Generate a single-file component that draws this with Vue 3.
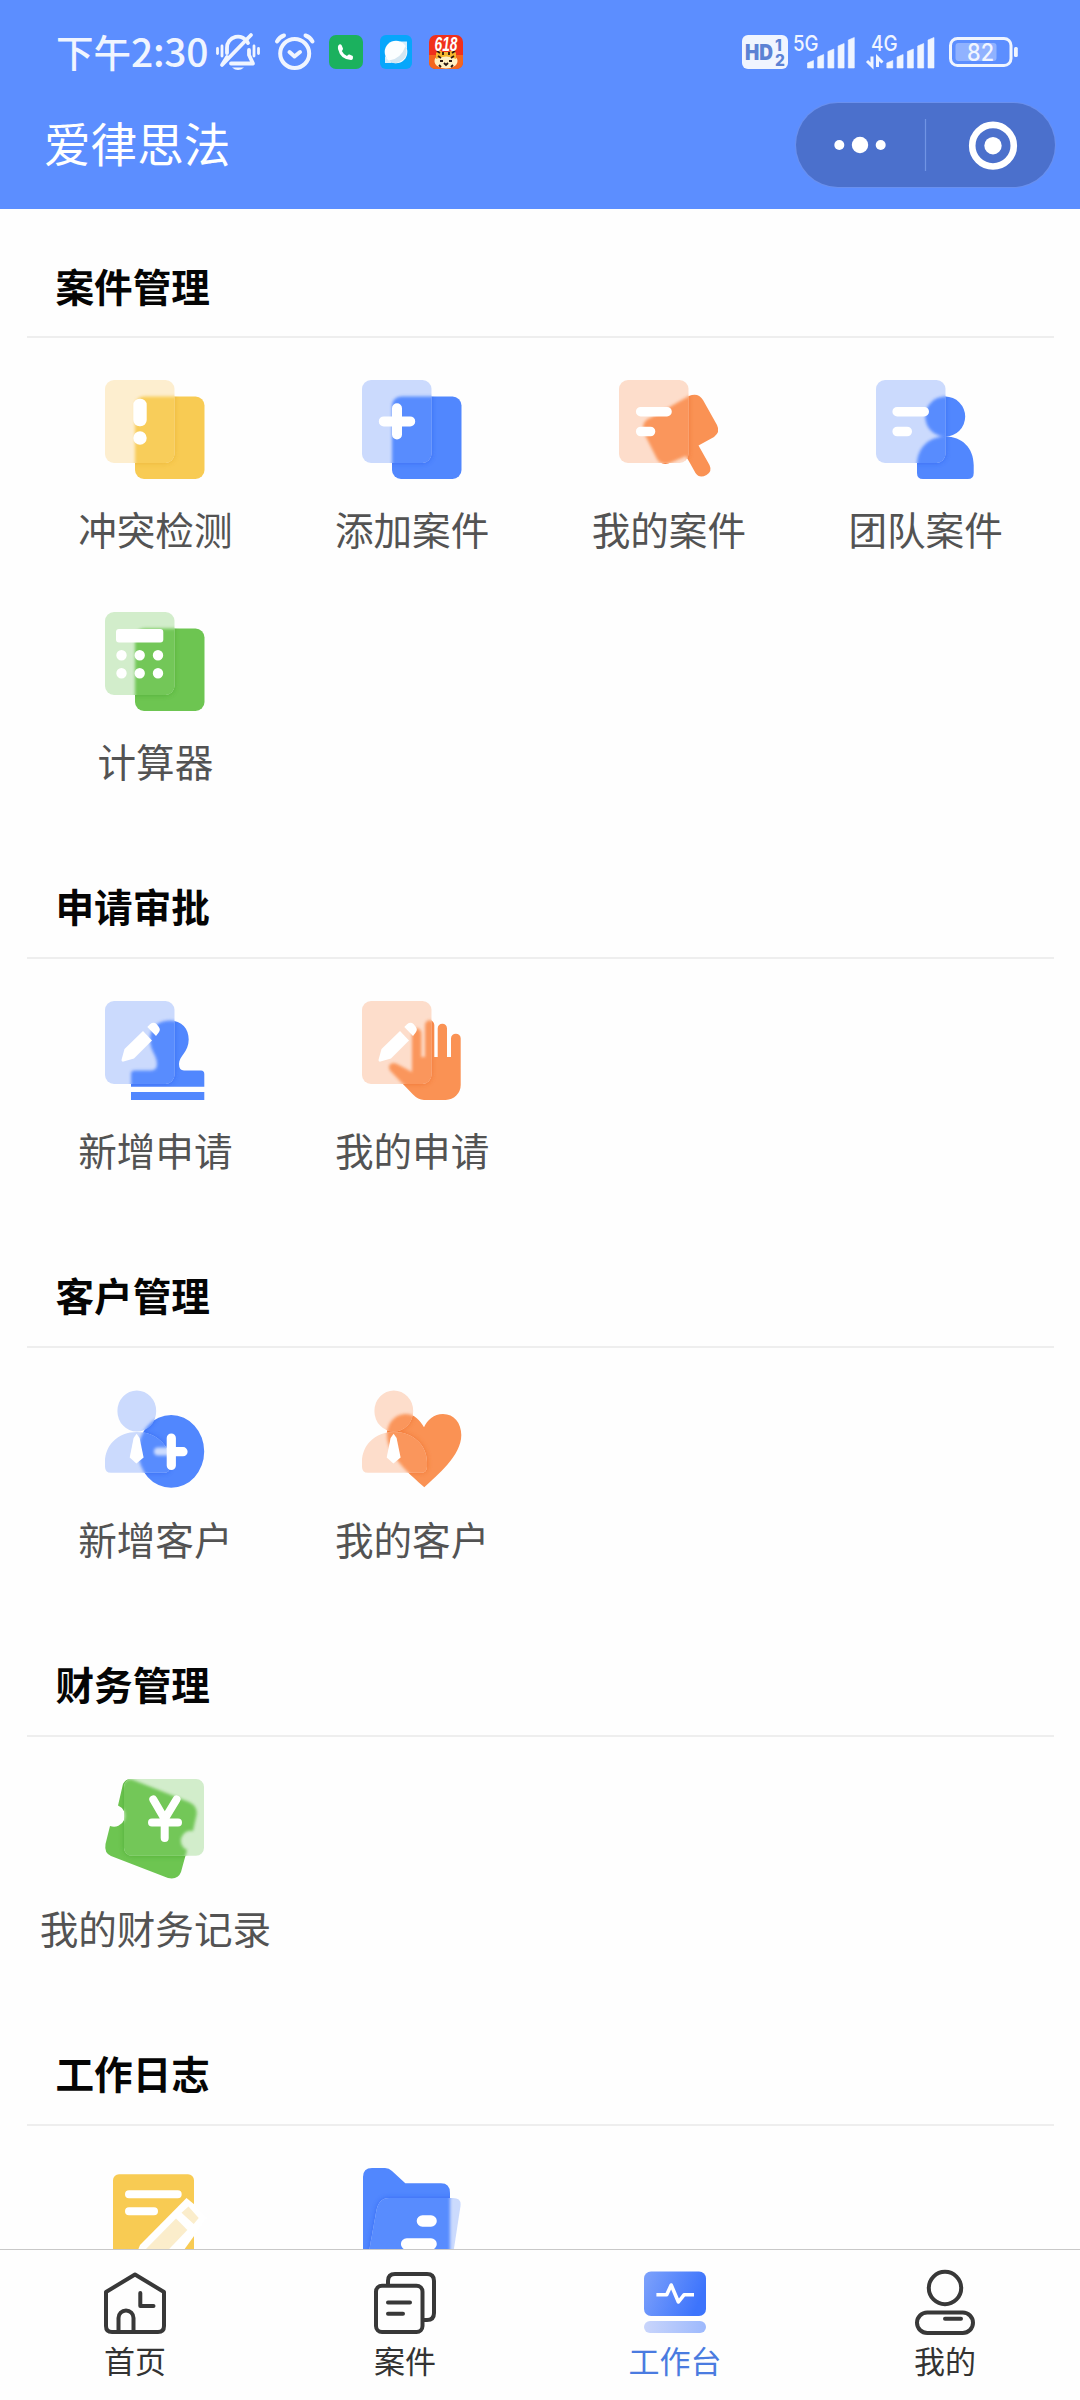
<script setup>
const rr = (x, y, w, h, r) =>
  `M${x + r} ${y}h${w - 2 * r}a${r} ${r} 0 0 1 ${r} ${r}v${h - 2 * r}a${r} ${r} 0 0 1 ${-r} ${r}h${2 * r - w}a${r} ${r} 0 0 1 ${-r} ${-r}v${2 * r - h}a${r} ${r} 0 0 1 ${r} ${-r}z`
const ell = (cx, cy, rx, ry = rx) =>
  `M${cx - rx} ${cy}a${rx} ${ry} 0 1 1 ${2 * rx} 0a${rx} ${ry} 0 1 1 ${-2 * rx} 0z`

const palette = {
  yellow: { main: '#f8cb53', light: '#fdeecf', dark: '#e6ae2a' },
  blue: { main: '#5187fe', light: '#cbdafd', dark: '#2c60f0' },
  orange: { main: '#fa9254', light: '#fdddcb', dark: '#ee6c28' },
  green: { main: '#6dc551', light: '#d2edcb', dark: '#46a52a' }
}

const sheet = rr(0, 0, 69.5, 83, 9)
const block = rr(30, 16.5, 69.5, 82.5, 9)
const pen =
  'M16.6 58.5L19.5 48L38 30L47 39.5L29 57.5L18.5 60.6Q16 61 16.6 58.5ZM42.3 26L45 23.3Q48.5 20.5 51.5 23L53.5 25.5Q56 28.5 53.7 31.5L51 35Z'
const client =
  ell(31.8, 21, 19.4, 20.6) +
  'M0 72C0 55 13 42 32 42C51 42 65 55 65 72V76.7Q65 82.7 59 82.7H6Q0 82.7 0 76.7Z'
const tie = 'M31.6 43.8L28.6 48L24.7 67.6L31.4 73.4L38.6 67.6L34.6 48Z'

const icons = {
  conflict: {
    tone: 'yellow', card: sheet, shape: block,
    marks: [rr(28.3, 18.7, 13.4, 27.6, 6.2), ell(35, 58, 6.7)]
  },
  add: {
    tone: 'blue', card: sheet, shape: block,
    lines: [{ d: 'M35 28.3V54.5M21.8 41.4H48.2', w: 10 }]
  },
  myCase: {
    tone: 'orange', card: sheet,
    shape:
      'M32 37.5L70 16Q79 12 84 20L98 45Q101.5 52 95 57L79.5 65.5L90.5 85Q93.5 91.5 87.5 95Q80.5 99 76.5 93L67 76L52 82.5Q43 86.5 38 79L25 53Q21 42 32 37.5Z',
    lines: [{ d: 'M21.7 31.7H48M21.7 51.5H31.5', w: 9.6 }]
  },
  team: {
    tone: 'blue', card: sheet,
    shape:
      ell(69.2, 36.6, 20) +
      'M41 85C41 68 53 56.5 69.3 56.5C86 56.5 97.7 68 97.7 85V93Q97.7 99 91.7 99H47Q41 99 41 93Z',
    lines: [{ d: 'M21.2 31.7H48.2M21.2 51.5H31.2', w: 9.6 }]
  },
  calc: {
    tone: 'green', card: sheet, shape: block,
    marks: [
      rr(11, 17, 47.3, 13.4, 3),
      ...[43.3, 61.3].flatMap((y) => [16.5, 34.7, 53].map((x) => ell(x, y, 5.2)))
    ]
  },
  newApply: {
    tone: 'blue', card: sheet,
    shape:
      'M64.5 19.5C77 19.5 83.7 28 83.7 38.5C83.7 51 74 55 74 63Q74 69.5 79 69.5H96Q99.3 69.5 99.3 73V85.7H26V73Q26 69.5 29.5 69.5H46Q52 69.5 52 63C52 54 45 50 45 38.5C45 28 52 19.5 64.5 19.5ZM26 91h73.3v8H26Z',
    marks: [pen]
  },
  myApply: {
    tone: 'orange', card: sheet,
    shape:
      'M50 71V32a4.65 4.65 0 0 1 9.3 0V56H63V24a4.65 4.65 0 0 1 9.3 0V56H75.7V27.4a4.65 4.65 0 0 1 9.3 0V56H89V37.5a4.85 4.85 0 0 1 9.7 0V84a15 15 0 0 1 -15 14.9H62Q56 98.7 51 93.5L28 69.5Q26 66 28 63.5Q30 61 34 62.5Z',
    marks: [pen]
  },
  newClient: {
    tone: 'blue', card: client, shape: ell(66.2, 61.4, 33, 36.4),
    marks: [tie],
    soft: 'M53 61.6H62',
    lines: [{ d: 'M66.3 48V75.5M66.3 61.7H78', w: 9.2 }]
  },
  myClient: {
    tone: 'orange', card: client,
    shape:
      'M62.3 97.3C50 86 25 66 25 45C25 33 33 24 44 24C52 24 58 30 62 37.3C65 30 72 24 81 24C92 24 99.3 33 99.3 45C99.3 66 75 85 62.3 97.3Z',
    marks: [tie]
  },
  money: {
    tone: 'green', card: rr(19, 0, 80, 76.8, 8),
    shape:
      'M27 .5L84 23Q93 27 91.5 36L88 52A10 10 0 0 0 82 71L76 93Q73 101 63 99L6 77Q-1 74 .5 65L5 47A10.5 10.5 0 0 0 13 26.5L18 5Q21 -1 27 .5Z',
    lines: [{ d: 'M48.3 20.5L59.7 40L71.5 20.5M59.7 40V59M47 43.5H73', w: 8 }]
  },
  diary: {
    tone: 'yellow', card: '',
    shape: rr(8, 6.3, 81, 93, 6),
    lines: [{ d: 'M24 26.3H72.7M24 43.3H49', w: 8 }],
    marks: ['M81.5 30L90 37L102 50L66 100H26L35 77Z'],
    tints: ['M83.5 38.5L93.7 50L88.7 56L76.5 44.7Z', 'M71 50.5L82.3 62L46 100H30L40 82Z']
  },
  folder: {
    tone: 'blue',
    card: 'M14.5 42Q17 30 27 30H91Q99.5 30 98.5 38L89 100H4Z',
    shape: 'M1 100V9Q1 0 10 0H23Q27 0 30 3L43.3 15.3H79Q88 15.3 88 25V100Z',
    lines: [{ d: 'M60.5 53H69M44.7 76H69', w: 11.6 }]
  }
}

const sections = [
  {
    title: '案件管理',
    items: [
      { label: '冲突检测', icon: 'conflict' },
      { label: '添加案件', icon: 'add' },
      { label: '我的案件', icon: 'myCase' },
      { label: '团队案件', icon: 'team' },
      { label: '计算器', icon: 'calc' }
    ]
  },
  {
    title: '申请审批',
    items: [
      { label: '新增申请', icon: 'newApply' },
      { label: '我的申请', icon: 'myApply' }
    ]
  },
  {
    title: '客户管理',
    items: [
      { label: '新增客户', icon: 'newClient' },
      { label: '我的客户', icon: 'myClient' }
    ]
  },
  { title: '财务管理', items: [{ label: '我的财务记录', icon: 'money' }] },
  {
    title: '工作日志',
    items: [
      { label: '', icon: 'diary' },
      { label: '', icon: 'folder' }
    ]
  }
]
const bars = [8, 14, 19.5, 25, 31]
</script>

<template>
  <div class="screen">
    <header class="top">
      <div class="status">
        <span class="clock">下午<b>2:30</b></span>
        <svg class="bell" width="44" height="38" viewBox="0 0 44 38" fill="none" stroke="#f0f5ff" stroke-width="3.8" stroke-linecap="round" stroke-linejoin="round">
          <path d="M11 20V15A11 11 0 0 1 32 10M33 17V22L37 30.5H15" />
          <path d="M35 2L6 32L11 24" />
          <path d="M1.5 15.5V20.5M6 13V23M38 13V23M42.5 15.5V20.5" stroke-width="2.8" />
          <path d="M16 34.5H28Q22 39.5 16 34.5Z" fill="#f0f5ff" stroke="none" />
        </svg>
        <svg class="alarm" width="40" height="38" viewBox="0 0 40 38" fill="none" stroke="#f0f5ff" stroke-width="4" stroke-linecap="round" stroke-linejoin="round">
          <circle cx="19.7" cy="20.5" r="14.5" />
          <path d="M14.5 19L19.5 23.5L25 19" />
          <path d="M2 8.5Q4.5 4 9 2.5M37.5 8.5Q35 4 30.5 2.5" />
        </svg>
        <svg class="app" width="34" height="34" viewBox="0 0 34 34">
          <rect width="34" height="34" rx="7" fill="#1bb15e" />
          <path d="M9.5 10.2Q11 8.5 12.5 10L14 13.5Q14 15 12.8 16Q14.5 19.5 18 21Q19.300 19.5 20.5 19.6L23.8 21Q24.6 24.8 22 25Q11.5 24.5 9 14Q8.6 11.5 9.5 10.2Z" fill="#fff" />
        </svg>
        <svg class="app" width="34" height="34" viewBox="0 0 34 34">
          <rect x="1" width="32" height="34" rx="6" fill="#07a6fb" />
          <path d="M6 21V28H13M21 6.5H28V14" fill="#d5eefc" />
          <circle cx="17" cy="17" r="11.300" fill="#fbfeff" />
          <path d="M26.500 11Q31 24 17 28.300Q13 28.300 10 25.500Q22 24 26.500 11Z" fill="#d3e6f2" />
        </svg>
        <svg class="app" width="34" height="34" viewBox="0 0 34 34">
          <rect width="34" height="34" rx="7" fill="#f0301c" />
          <path d="M0 20H34V27Q34 34 27 34H7Q0 34 0 27Z" fill="#f4661f" />
          <ellipse cx="17" cy="26" rx="11.5" ry="7.5" fill="#fff0c4" />
          <path d="M7 24V18L10 15L14 17H20L24 15L27 18V24Q17 19 7 24Z" fill="#f6b72f" />
          <path d="M8 16L11 18M26 16L23 18M14 17V20M20 17V20M9 21L12 23M25 21L22 23M11 26H14M20 26H23M15 28L17 30L19 28M10 30L12 32M24 30L22 32" stroke="#2b1710" stroke-width="1.8" fill="none" />
          <text x="17" y="15.500" text-anchor="middle" class="promo" textLength="23" lengthAdjust="spacingAndGlyphs">618</text>
        </svg>
        <span class="spacer"></span>
        <svg class="hd" width="46" height="34" viewBox="0 0 46 34">
          <rect width="46" height="34" rx="6" fill="#f0f5ff" />
          <text x="3" y="24.5" class="hdbig" textLength="28" lengthAdjust="spacingAndGlyphs">HD</text>
          <text x="33" y="15.5" class="hdsmall">1</text>
          <text x="33" y="30.5" class="hdsmall">2</text>
        </svg>
        <svg class="sig" width="66" height="34" viewBox="0 0 66 34">
          <text x="2" y="15.500" class="net" textLength="25.500" lengthAdjust="spacingAndGlyphs">5G</text>
          <path v-for="(h, i) in bars" :key="i" :d="`M${16.5 + i * 10.2} 33V${36 - h}L${22.5 + i * 10.2} ${33.5 - h}V33Z`" class="bar" />
        </svg>
        <svg class="sig two" width="70" height="34" viewBox="0 0 70 34">
          <text x="5" y="15.500" class="net" textLength="26.500" lengthAdjust="spacingAndGlyphs">4G</text>
          <path d="M6 21.5V31L1 26M11.500 32V22.500L16.500 27.500" fill="none" stroke="#f0f5ff" stroke-width="3" />
          <path v-for="(h, i) in bars" :key="i" :d="`M${20.8 + i * 10.3} 33V${36 - h}L${26.8 + i * 10.3} ${33.5 - h}V33Z`" class="bar" />
        </svg>
        <svg class="battery" width="70" height="34" viewBox="0 0 70 34">
          <rect x="1.500" y="3.500" width="60.500" height="27" rx="7" fill="none" stroke="#f0f5ff" stroke-width="3" />
          <rect x="6.500" y="8" width="41" height="18" rx="3" fill="#90b2ff" />
          <rect x="65" y="12" width="3.800" height="10" rx="1.500" fill="#f0f5ff" />
          <text x="31.500" y="25.800" text-anchor="middle" class="pct" textLength="27" lengthAdjust="spacingAndGlyphs">82</text>
        </svg>
      </div>
      <div class="nav">
        <h1>爱律思法</h1>
        <div class="capsule">
          <svg width="259" height="84" viewBox="0 0 259 84" fill="#fff">
            <circle cx="43.300" cy="42" r="5" />
            <circle cx="64" cy="42" r="8.200" />
            <circle cx="84.700" cy="42" r="5" />
            <path d="M129.500 16V68" stroke="#7194e4" stroke-width="1.200" />
            <circle cx="197" cy="42.700" r="20.800" fill="none" stroke="#fff" stroke-width="6.600" />
            <circle cx="197" cy="42.700" r="8.700" />
          </svg>
        </div>
      </div>
    </header>

    <main class="content">
      <section v-for="s in sections" :key="s.title" class="group">
        <h2>{{ s.title }}</h2>
        <div class="grid">
          <div v-for="it in s.items" :key="it.icon" class="cell">
            <svg class="pic" width="100" height="100" viewBox="0 0 100 100">
              <defs>
                <clipPath :id="it.icon + '-s'"><path :d="icons[it.icon].shape" /></clipPath>
                <clipPath :id="it.icon + '-c'"><path :d="icons[it.icon].card" /></clipPath>
                <filter :id="it.icon + '-b'" x="-20%" y="-20%" width="140%" height="140%">
                  <feGaussianBlur stdDeviation="1.7" />
                </filter>
                <filter :id="it.icon + '-d'" x="-20%" y="-20%" width="140%" height="140%">
                  <feGaussianBlur stdDeviation="2.8" />
                </filter>
              </defs>
              <path :d="icons[it.icon].shape" :fill="palette[icons[it.icon].tone].main" />
              <template v-if="icons[it.icon].card">
                <g :clip-path="`url(#${it.icon}-s)`">
                  <path :d="icons[it.icon].card" :fill="palette[icons[it.icon].tone].dark" :filter="`url(#${it.icon}-d)`" opacity=".75" />
                </g>
                <path :d="icons[it.icon].card" :fill="palette[icons[it.icon].tone].light" />
                <g :clip-path="`url(#${it.icon}-c)`">
                  <path :d="icons[it.icon].shape" :fill="palette[icons[it.icon].tone].main" :filter="`url(#${it.icon}-b)`" opacity=".94" />
                </g>
              </template>
              <path v-if="icons[it.icon].soft" :d="icons[it.icon].soft" stroke="#fff" stroke-width="8" stroke-linecap="round" opacity=".7" class="soft" />
              <path v-for="(m, i) in icons[it.icon].marks" :key="'m' + i" :d="m" fill="#fff" />
              <path v-for="(l, i) in icons[it.icon].lines" :key="'l' + i" :d="l.d" :stroke-width="l.w" class="line" />
              <path v-for="(t, i) in icons[it.icon].tints" :key="'t' + i" :d="t" fill="#fbedcb" />
            </svg>
            <span v-if="it.label" class="label">{{ it.label }}</span>
          </div>
        </div>
      </section>
    </main>

    <nav class="tabs">
      <a class="tab">
        <svg width="62" height="62" viewBox="0 0 62 62" class="stroke">
          <path d="M2 20L31 2.5L60 20V54Q60 60 54 60H8Q2 60 2 54Z" />
          <path d="M14.5 59V46a7.5 7.5 0 0 1 15 0V59" />
          <path d="M36.3 21V34H49.5" />
        </svg>
        <span>首页</span>
      </a>
      <a class="tab">
        <svg width="62" height="62" viewBox="0 0 62 62" class="stroke">
          <rect x="2" y="13.7" width="46.5" height="46.3" rx="6" />
          <path d="M14 13V9Q14 2 21 2H53Q60 2 60 9V41Q60 48 53 48H49" />
          <path d="M14 30.5H36M14 41.7H29" />
        </svg>
        <span>案件</span>
      </a>
      <a class="tab active">
        <svg width="62" height="62" viewBox="0 0 62 62" fill="none">
          <defs>
            <linearGradient id="panel" x1="0" y1="0" x2="1" y2=".3">
              <stop offset="0" stop-color="#7ea2fb" />
              <stop offset="1" stop-color="#3d74fc" />
            </linearGradient>
            <linearGradient id="stand" x1="0" y1="0" x2="1" y2="0">
              <stop offset="0" stop-color="#c9d5fb" />
              <stop offset="1" stop-color="#9db9fd" />
            </linearGradient>
          </defs>
          <rect y="-.5" width="62" height="44.5" rx="7" fill="url(#panel)" />
          <rect y="49" width="62" height="12" rx="6" fill="url(#stand)" />
          <path d="M12.4 22.8H22.7L27.2 13L34.4 30L40 22.8H50" stroke="#fff" stroke-width="3.6" stroke-linejoin="round" />
        </svg>
        <span>工作台</span>
      </a>
      <a class="tab">
        <svg width="62" height="62" viewBox="0 0 62 62" class="stroke">
          <circle cx="31" cy="16" r="16.2" />
          <rect x="3" y="40.5" width="56" height="20.5" rx="10.25" />
          <path d="M31 46.8H47" />
        </svg>
        <span>我的</span>
      </a>
    </nav>
  </div>
</template>

<style>
body {
  margin: 0;
  background: #fff;
}
</style>

<style scoped>
.screen {
  width: 1080px;
  height: 2400px;
  display: flex;
  flex-direction: column;
  overflow: hidden;
  background: #fefefe;
  font-family: "Noto Sans CJK SC", sans-serif;
}
.top {
  flex: none;
  height: 209px;
  box-sizing: border-box;
  background: #5c8eff;
  color: #fff;
}
.status {
  height: 82px;
  padding: 22px 61px 0 56px;
  box-sizing: border-box;
  display: flex;
  align-items: center;
}
.status svg {
  flex: none;
  overflow: visible;
}
.clock {
  width: 150px;
  margin-right: 10px;
  padding-bottom: 4px;
  font-size: 37.5px;
  font-weight: 500;
  line-height: 56px;
  white-space: nowrap;
  color: #f0f5ff;
}
.clock b {
  font-weight: 500;
  font-size: 39px;
  letter-spacing: -0.3px;
}
.alarm {
  margin: 0 14px 0 15px;
}
.app {
  margin-right: 16px;
}
.spacer {
  flex: 1;
}
.promo {
  font: italic 700 20px "Liberation Sans", sans-serif;
  fill: #fff;
}
.hdbig {
  font: 900 21px "Inter", sans-serif;
  fill: #5c82d4;
}
.hdsmall {
  font: 800 15.5px "Inter", sans-serif;
  fill: #5c82d4;
}
.hd {
  margin-right: 3px;
}
.net {
  font: 500 21px "Inter", sans-serif;
  fill: #f0f5ff;
}
.bar {
  fill: #f0f5ff;
  stroke: #f0f5ff;
  stroke-width: 0.6;
  stroke-linejoin: round;
}
.sig.two {
  margin: 0 13px 0 9px;
}
.pct {
  font: 500 24px "Inter", sans-serif;
  fill: #f0f5ff;
}
.nav {
  height: 126px;
  padding: 0 25px 0 44px;
  display: flex;
  align-items: center;
  justify-content: space-between;
}
h1 {
  margin: 0;
  padding-bottom: 7px;
  font-size: 46.6px;
  line-height: 60px;
  font-weight: 400;
}
.capsule {
  width: 259px;
  height: 84px;
  border-radius: 42px;
  background: #4b70cc;
  box-shadow: 0 0 0 1px #6a90ee;
}
.capsule svg {
  display: block;
}
.content {
  flex: 1;
  min-height: 0;
  overflow: hidden;
}
.group {
  margin: 0 26px 28.2px 27px;
}
h2 {
  margin: 0;
  height: 127px;
  padding: 47.5px 0 0 28.5px;
  box-sizing: border-box;
  font-size: 38.6px;
  line-height: 56px;
  font-weight: 700;
  color: #050505;
}
.grid {
  border-top: 2px solid #eee;
  display: grid;
  grid-template-columns: repeat(4, 1fr);
  grid-auto-rows: 231.8px;
}
.cell {
  display: flex;
  flex-direction: column;
  align-items: center;
  padding-top: 41.8px;
}
.pic {
  flex: none;
  overflow: visible;
}
.line {
  fill: none;
  stroke: #fff;
  stroke-linecap: round;
  stroke-linejoin: round;
}
.soft {
  filter: blur(1.5px);
}
.label {
  margin-top: 20px;
  font-size: 38.6px;
  line-height: 56px;
  white-space: nowrap;
  color: #535353;
}
.tabs {
  flex: none;
  height: 151px;
  box-sizing: border-box;
  border-top: 1px solid #c8c8c8;
  background: #fefefe;
  display: flex;
}
.tab {
  flex: 1;
  display: flex;
  flex-direction: column;
  align-items: center;
  padding-top: 21.5px;
  font-size: 31px;
  color: #333;
}
.tab svg {
  flex: none;
  overflow: visible;
}
.tab span {
  margin-top: 5px;
  line-height: 42px;
}
.active {
  color: #4a7be0;
}
.stroke {
  fill: none;
  stroke: #383838;
  stroke-width: 4;
  stroke-linejoin: round;
  stroke-linecap: round;
}
</style>
